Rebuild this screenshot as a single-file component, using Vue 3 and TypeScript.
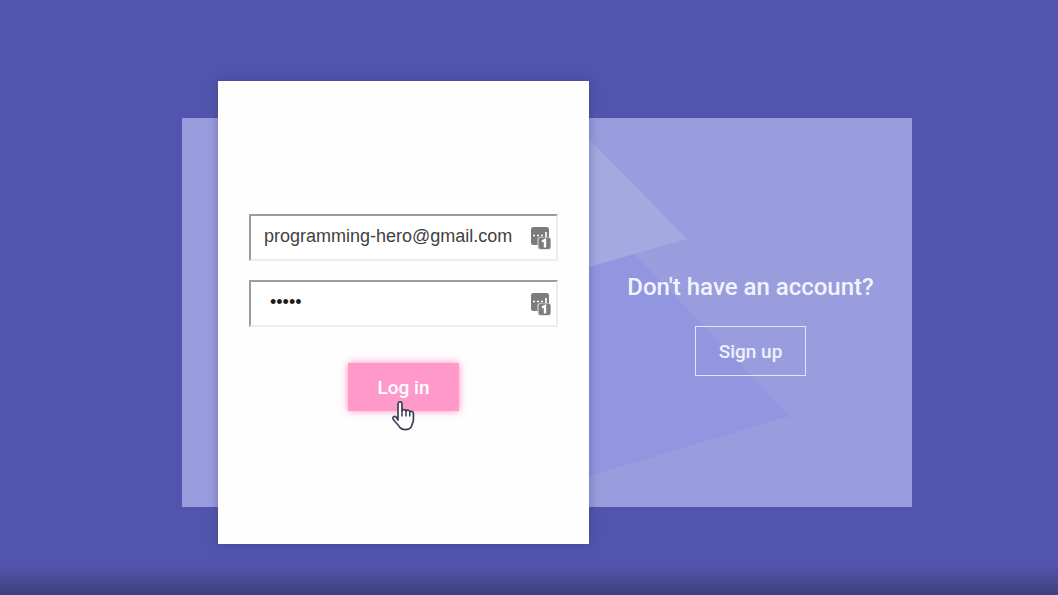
<script setup lang="ts">
import { ref } from 'vue'

const email = ref<string>('programming-hero@gmail.com')
const password = ref<string>('12345')
</script>

<template>
  <main class="page">
    <div class="panel">
      <svg class="shapes" viewBox="0 0 730 389" preserveAspectRatio="xMidYMid slice" aria-hidden="true">
        <polygon points="407,89 608,298 250,405" fill="#9296e1" />
        <polygon points="345,-42 505,121 250,194" fill="#a4a9e2" />
      </svg>

      <form class="card" @submit.prevent>
        <div class="field">
          <input v-model="email" class="input" type="email" aria-label="Email" autocomplete="off" />
          <svg class="vault" viewBox="0 0 21 24" aria-hidden="true">
            <rect x="1" y="1" width="18" height="18" rx="2.5" fill="#7d7a7d" />
            <path d="M3 9.5h2M7 9.5h2M11 9.5h2M16 6v5" stroke="#fff" stroke-width="1.7" />
            <rect x="7.5" y="11" width="14" height="13" rx="3" fill="#e4e4e4" />
            <rect x="8.5" y="11.5" width="12" height="11.5" rx="2.5" fill="#7d7a7d" />
            <path d="M12 15.5l3-1.5V21.5" fill="none" stroke="#fff" stroke-width="2.4" />
          </svg>
        </div>
        <div class="field">
          <input v-model="password" class="input input-password" type="password" aria-label="Password" autocomplete="off" />
          <svg class="vault" viewBox="0 0 21 24" aria-hidden="true">
            <rect x="1" y="1" width="18" height="18" rx="2.5" fill="#7d7d7d" />
            <path d="M3 9.5h2M7 9.5h2M11 9.5h2M16 6v5" stroke="#fff" stroke-width="1.7" />
            <rect x="7.5" y="11" width="14" height="13" rx="3" fill="#e4e4e4" />
            <rect x="8.5" y="11.5" width="12" height="11.5" rx="2.5" fill="#7d7d7d" />
            <path d="M12 15.5l3-1.5V21.5" fill="none" stroke="#fff" stroke-width="2.4" />
          </svg>
        </div>
        <div class="action">
          <button class="login" type="submit">Log in</button>
          <svg class="pointer" viewBox="0 0 24 32" aria-hidden="true">
            <path
              d="M7 20V4.2C7 1.2 11 1.2 11 4.2V11C11.6 9 14.8 9.2 15 11.2C16 9.6 18.6 10 18.8 12C20 10.8 22.4 11.4 22.4 13.6V20C22.4 23 20.5 24.4 20.2 27.2C17.5 30.4 11.4 30.4 9 27.6C7.2 24.4 4 22.4 2 18.8C1.2 16.8 3.6 15.6 5.2 17.2Z"
              fill="#fff" stroke="#3b4054" stroke-width="1.7" stroke-linejoin="round"
            />
            <path d="M11 10.5v5.5M15 11v5M18.8 12v4" fill="none" stroke="#3b4054" stroke-width="1.5" stroke-linecap="round" />
          </svg>
        </div>
      </form>

      <section class="signup">
        <h1 class="question">Don't have an account?</h1>
        <button class="signup-button" type="button">Sign up</button>
      </section>
    </div>
  </main>
</template>

<style>
body {
  margin: 0;
  background: #5255ad;
}
</style>

<style scoped>
.page {
  box-sizing: border-box;
  min-height: 100vh;
  padding: 30px 0 0 36px;
  display: grid;
  grid-template-columns: minmax(0, 730px);
  justify-content: center;
  align-content: center;
  background: linear-gradient(to top, #3f407f, #5255ad 30px);
  font-family: Roboto, "Liberation Sans", sans-serif;
}

.panel {
  position: relative;
  display: grid;
  grid-template-columns: minmax(0, 371fr) minmax(0, 323fr);
  padding-left: 36px;
  background: #999ddd;
}

.shapes {
  position: absolute;
  inset: 0;
  width: 100%;
  height: 100%;
}

.card {
  position: relative;
  margin: -37px 0;
  padding: 133px 31px;
  display: flex;
  flex-direction: column;
  gap: 19px;
  background: #fefefe;
  box-shadow: 0 0 10px rgba(40, 40, 90, 0.35);
}

.field {
  position: relative;
  display: flex;
}

.input {
  box-sizing: border-box;
  width: 100%;
  height: 47px;
  padding: 0 40px 2px 13px;
  border: 2px solid;
  border-color: #9c9c9c #ededf0 #ededf0 #9c9c9c;
  border-radius: 0;
  outline: none;
  background: #fff;
  color: #414141;
  font: 18px "Liberation Sans", Arial, sans-serif;
}

.input-password {
  padding-left: 19px;
  color: #1c1c1c;
}

.vault {
  position: absolute;
  top: 12px;
  right: 7px;
  width: 21px;
  height: 24px;
}

.action {
  position: relative;
  align-self: center;
  margin-top: 17px;
}

.login {
  display: block;
  height: 48px;
  padding: 0 30px;
  border: 0;
  background: #ff99c9;
  box-shadow: 0 0 8px #ff8fc4;
  color: #fff;
  font: 500 19px Roboto, sans-serif;
}

.pointer {
  position: absolute;
  top: 37px;
  left: 43px;
  width: 24px;
  height: 32px;
}

.signup {
  position: relative;
  padding-top: 22px;
  display: flex;
  flex-direction: column;
  align-items: center;
  justify-content: center;
  gap: 23px;
}

.question {
  margin: 0;
  color: #f1f4ff;
  font-size: 24px;
  font-weight: 500;
  line-height: 32px;
}

.signup-button {
  height: 50px;
  padding: 0 23px;
  border: 1px solid #dfe6ff;
  background: transparent;
  color: #edf1ff;
  font: 500 19px Roboto, sans-serif;
}
</style>
